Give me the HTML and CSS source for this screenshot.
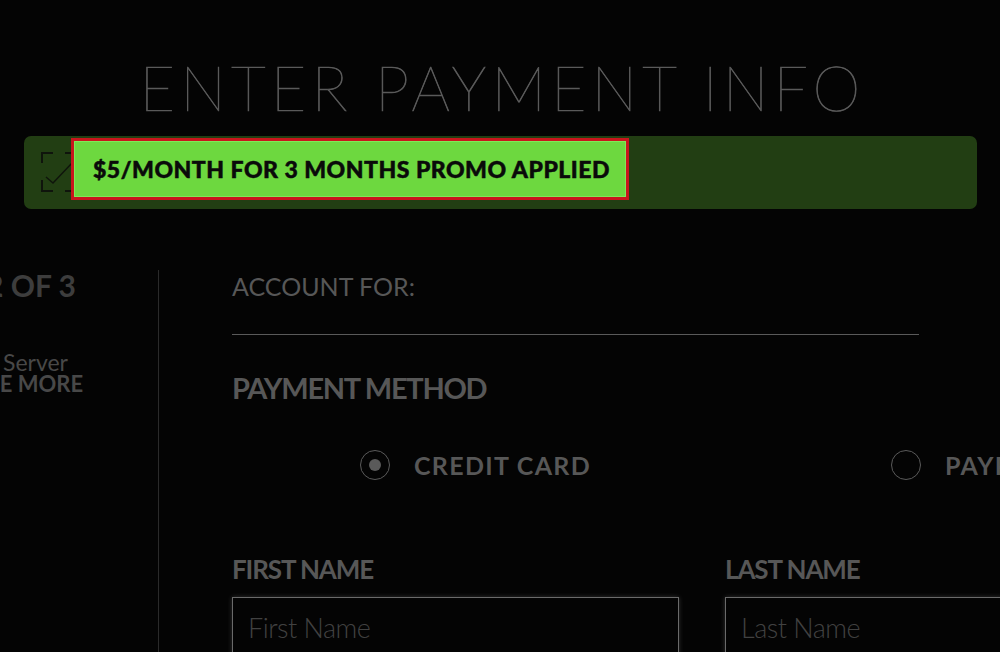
FILE: index.html
```html
<!DOCTYPE html>
<html lang="en">
<head>
<meta charset="utf-8">
<title>Enter Payment Info</title>
<link rel="stylesheet" href="styles.css">
</head>
<body>
<div class="page">
  <h1 class="title">ENTER PAYMENT INFO</h1>

  <div class="promo-bar">
    <svg class="promo-icon" width="36" height="40" viewBox="0 0 36 40" fill="none" stroke="#0f140c" stroke-width="2">
      <path d="M1 11V1H12"/>
      <path d="M1 28V39H12"/>
      <path d="M24 1H35V11"/>
      <path d="M24 39H35V28"/>
      <path d="M5 25L12 31L31 11" stroke-width="1.4"/>
    </svg>
    <div class="promo-highlight">
      <span class="promo-text">$5/MONTH FOR 3 MONTHS PROMO APPLIED</span>
    </div>
  </div>

  <div class="main">
    <aside class="side">
      <div class="step">STEP 2 OF 3</div>
      <div class="plan-name">Server</div>
      <div class="see-more">SEE MORE</div>
    </aside>

    <section class="form">
      <div class="account-label">ACCOUNT FOR:</div>
      <div class="account-rule"></div>

      <h2 class="section-title">PAYMENT METHOD</h2>

      <div class="methods">
        <label class="method">
          <span class="radio radio-on"></span>
          <span class="method-label">CREDIT CARD</span>
        </label>
        <label class="method">
          <span class="radio"></span>
          <span class="method-label">PAYPAL</span>
        </label>
      </div>

      <div class="name-row">
        <div class="field">
          <div class="field-label">FIRST NAME</div>
          <input class="field-input" type="text" placeholder="First Name">
        </div>
        <div class="field">
          <div class="field-label">LAST NAME</div>
          <input class="field-input" type="text" placeholder="Last Name">
        </div>
      </div>
    </section>
  </div>
</div>
</body>
</html>
```
FILE: styles.css
```css
html, body {
  margin: 0;
  padding: 0;
  background: #040404;
}

body {
  width: 1000px;
  height: 652px;
  overflow: hidden;
  font-family: Lato, "Liberation Sans", sans-serif;
  color: #565656;
}

.page {
  padding-top: 57px;
}

.title {
  margin: 0;
  font-size: 61px;
  line-height: 61px;
  font-weight: 100;
  letter-spacing: 5.1px;
  text-indent: 5.1px;
  text-align: center;
  color: #5a5a5a;
  -webkit-text-stroke: 0.7px #5a5a5a;
}

.promo-bar {
  margin: 18px 23px 0 24px;
  height: 73px;
  background: #223e13;
  border-radius: 7px;
  display: flex;
  align-items: flex-start;
  padding-left: 17px;
}

.promo-icon {
  margin-top: 16px;
  flex: none;
}

.promo-highlight {
  margin-top: 2px;
  margin-left: -6px;
  width: 558px;
  height: 62px;
  box-sizing: border-box;
  border: 3px solid #c8161d;
  background: #6dd83f;
  box-shadow: inset 0 0 0 1px #80e858;
  display: flex;
  align-items: center;
  padding-left: 19px;
}

.promo-text {
  font-size: 23px;
  font-weight: 900;
  letter-spacing: 0.5px;
  color: #0a0a0a;
  -webkit-text-stroke: 0.5px #0a0a0a;
  white-space: nowrap;
}

.main {
  margin-top: 61px;
  display: grid;
  grid-template-columns: 159px 1fr;
  height: 400px;
}

.side {
  border-right: 1px solid #2a2a2a;
  padding-right: 82px;
  min-width: 0;
}

.step {
  display: flex;
  justify-content: flex-end;
  font-size: 30px;
  line-height: 30px;
  font-weight: 700;
  color: #3d3d3d;
  white-space: nowrap;
}

.plan-name {
  margin-top: 52px;
  margin-left: 3px;
  font-size: 23px;
  line-height: 21px;
  font-weight: 400;
  color: #484848;
  white-space: nowrap;
}

.see-more {
  margin-top: 1px;
  margin-left: -25px;
  font-size: 22px;
  line-height: 20px;
  font-weight: 700;
  color: #484848;
  white-space: nowrap;
}

.form {
  padding-left: 73px;
  padding-top: 1px;
}

.account-label {
  font-size: 25px;
  line-height: 30px;
  font-weight: 400;
  color: #575757;
}

.account-rule {
  margin-top: 33px;
  width: 687px;
  height: 1px;
  background: #5a5a5a;
}

.section-title {
  margin: 35px 0 0;
  font-size: 29px;
  line-height: 36px;
  font-weight: 700;
  letter-spacing: -1.3px;
  color: #575757;
}

.methods {
  margin-top: 41px;
  padding-left: 128px;
  display: grid;
  grid-template-columns: 531px 200px;
}

.method {
  display: flex;
  align-items: center;
  height: 36px;
  gap: 24px;
}

.radio {
  width: 30px;
  height: 30px;
  box-sizing: border-box;
  border: 1.5px solid #5a5a5a;
  border-radius: 50%;
  display: flex;
  align-items: center;
  justify-content: center;
  flex: none;
}

.radio-on::after {
  content: "";
  width: 12px;
  height: 12px;
  border-radius: 50%;
  background: #5a5a5a;
}

.method-label {
  font-size: 25px;
  line-height: 36px;
  font-weight: 700;
  letter-spacing: 1.3px;
  color: #575757;
  white-space: nowrap;
}

.name-row {
  margin-top: 70px;
  display: grid;
  grid-template-columns: 447px 447px;
  column-gap: 46px;
}

.field-label {
  font-size: 26px;
  line-height: 32px;
  font-weight: 700;
  letter-spacing: -1.1px;
  color: #575757;
}

.field-input {
  display: block;
  margin-top: 12px;
  width: 100%;
  height: 60px;
  box-sizing: border-box;
  padding: 0 15px;
  border: 1px solid #6a6a6a;
  background: #040404;
  box-shadow: 0 0 5px rgba(255, 255, 255, 0.18);
  font-family: Lato, "Liberation Sans", sans-serif;
  font-size: 27px;
  font-weight: 300;
  letter-spacing: -0.5px;
  color: #888;
  outline: none;
}

.field-input::placeholder {
  color: #414141;
}
```
